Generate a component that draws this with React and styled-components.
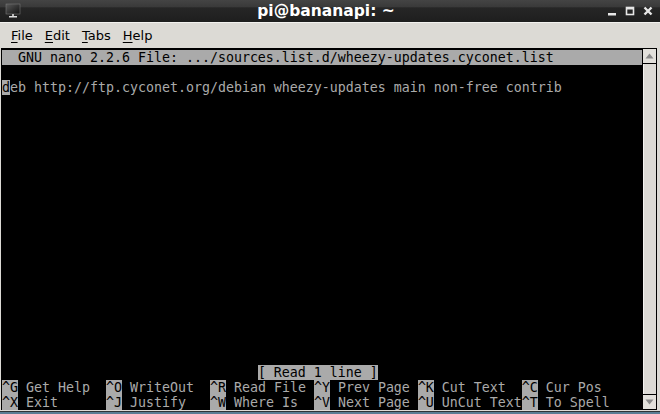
import styled, { createGlobalStyle } from "styled-components";

const GlobalStyle = createGlobalStyle`
    html, body {
        margin: 0;
        padding: 0;
        background: #5a7d94;
    }
    #root {
        width: 660px;
        height: 414px;
        overflow: hidden;
    }
`

const shortcuts = [
    [["^G", "Get Help"], ["^O", "WriteOut"], ["^R", "Read File"], ["^Y", "Prev Page"], ["^K", "Cut Text"], ["^C", "Cur Pos"]],
    [["^X", "Exit"], ["^J", "Justify"], ["^W", "Where Is"], ["^V", "Next Page"], ["^U", "UnCut Text"], ["^T", "To Spell"]],
]

function pad(str, n) {
    return (str + " ".repeat(n)).slice(0, n)
}

function MonitorIcon() {
    return (
        <svg width="16" height="16" viewBox="0 0 16 16">
            <defs>
                <linearGradient id="scr" x1="0" y1="0" x2="1" y2="1">
                    <stop offset="0" stopColor="#5a5a5a" />
                    <stop offset="1" stopColor="#111" />
                </linearGradient>
            </defs>
            <rect x="1" y="1" width="14" height="10" fill="url(#scr)" stroke="#777" strokeWidth="0.6" />
            <rect x="7" y="11" width="2" height="2" fill="#bbb" />
            <rect x="4" y="13" width="8" height="1.5" fill="#ddd" />
        </svg>
    )
}

export default function App() {
    const header = pad("  GNU nano 2.2.6 File: .../sources.list.d/wheezy-updates.cyconet.list", 80)

    return (
        <>
            <GlobalStyle />
            <StyledWindow>
                <StyledTitleBar>
                    <StyledIconSlot><MonitorIcon /></StyledIconSlot>
                    <StyledTitle>pi@bananapi: ~</StyledTitle>
                    <StyledControls>
                        <svg width="12" height="12" viewBox="0 0 12 12"><rect x="2" y="8" width="8" height="2.5" fill="#e6e6e6" /></svg>
                        <svg width="12" height="12" viewBox="0 0 12 12"><rect x="2.5" y="2.5" width="7" height="7" fill="none" stroke="#e6e6e6" strokeWidth="1.6" /><rect x="2.5" y="2.5" width="7" height="2" fill="#e6e6e6" /></svg>
                        <svg width="12" height="12" viewBox="0 0 12 12"><path d="M2.5 2.5 L9.5 9.5 M9.5 2.5 L2.5 9.5" stroke="#e6e6e6" strokeWidth="2.4" /></svg>
                    </StyledControls>
                </StyledTitleBar>
                <StyledMenuBar>
                    <StyledMenuItem><u>F</u>ile</StyledMenuItem>
                    <StyledMenuItem><u>E</u>dit</StyledMenuItem>
                    <StyledMenuItem><u>T</u>abs</StyledMenuItem>
                    <StyledMenuItem><u>H</u>elp</StyledMenuItem>
                </StyledMenuBar>
                <StyledBody>
                    <StyledTerminal>
                        <StyledRow><StyledInv>{header}</StyledInv></StyledRow>
                        <StyledRow />
                        <StyledRow><StyledInv>d</StyledInv>eb http://ftp.cyconet.org/debian wheezy-updates main non-free contrib</StyledRow>
                        {Array.from({ length: 18 }).map((_, i) => <StyledRow key={i} />)}
                        <StyledRow>{" ".repeat(32)}<StyledInv>[ Read 1 line ]</StyledInv></StyledRow>
                        {shortcuts.map((line, i) => (
                            <StyledRow key={"s" + i}>
                                {line.map(([key, label], j) => (
                                    <span key={j}>
                                        <StyledInv>{key}</StyledInv>
                                        {j === line.length - 1 ? " " + label : pad(" " + label, 11)}
                                    </span>
                                ))}
                            </StyledRow>
                        ))}
                    </StyledTerminal>
                    <StyledScrollbar>
                        <StyledArrowButton>
                            <svg width="9" height="6" viewBox="0 0 9 6"><path d="M0.5 5.5 L4.5 0.5 L8.5 5.5 Z" fill="#8a8a8a" /></svg>
                        </StyledArrowButton>
                        <StyledTrough />
                        <StyledArrowButton>
                            <svg width="9" height="6" viewBox="0 0 9 6"><path d="M0.5 0.5 L4.5 5.5 L8.5 0.5 Z" fill="#8a8a8a" /></svg>
                        </StyledArrowButton>
                    </StyledScrollbar>
                </StyledBody>
            </StyledWindow>
        </>
    )
}

const StyledWindow = styled.div`

    width: 660px;
    height: 412px;
    display: flex;
    flex-direction: column;
    background-color: #dcdad5;
    border-bottom: 1px solid #2e3436;
    box-sizing: border-box;

`

const StyledTitleBar = styled.div`

    height: 22px;
    display: flex;
    flex-direction: row;
    align-items: center;
    background: linear-gradient(to bottom, #444 0%, #3a3a3a 30%, #262626 36%, #1e1e1e 100%);
    padding: 0 6px 0 5px;
    flex-shrink: 0;

`

const StyledIconSlot = styled.div`

    width: 16px;
    height: 16px;
    display: flex;

`

const StyledTitle = styled.div`

    flex: 1;
    text-align: center;
    color: #ffffff;
    font-family: 'DejaVu Sans', sans-serif;
    font-weight: bold;
    font-size: 15.5px;
    padding-left: 25px;

`

const StyledControls = styled.div`

    display: flex;
    flex-direction: row;
    align-items: center;
    gap: 6px;

`

const StyledMenuBar = styled.div`

    height: 25px;
    display: flex;
    flex-direction: row;
    align-items: center;
    padding: 0 5px;
    background-color: #dcdad5;
    border-top: 1px solid #f2f1ee;
    box-sizing: border-box;
    flex-shrink: 0;

`

const StyledMenuItem = styled.div`

    padding: 0 6px;
    font-family: 'DejaVu Sans', sans-serif;
    font-size: 13px;
    color: #000;
    margin-top: 1px;

    u {
        text-decoration-thickness: 1px;
        text-underline-offset: 2px;
    }

`

const StyledBody = styled.div`

    flex: 1;
    display: flex;
    flex-direction: row;
    padding: 1px 2px 1px 1px;
    min-height: 0;

`

const StyledTerminal = styled.div`

    width: 641px;
    background-color: #000;
    padding: 2px 0 0 1px;
    box-sizing: border-box;
    font-family: 'DejaVu Sans Mono', monospace;
    font-size: 13.29px;
    color: #aaaaaa;
    overflow: hidden;

`

const StyledRow = styled.div`

    height: 15px;
    line-height: 15px;
    white-space: pre;

`

const StyledInv = styled.span`

    background-color: #aaaaaa;
    color: #000;

`

const StyledScrollbar = styled.div`

    width: 15px;
    display: flex;
    flex-direction: column;
    border: 1px solid #000;
    box-sizing: border-box;
    background-color: #dcdad5;

`

const StyledArrowButton = styled.div`

    height: 14px;
    display: flex;
    align-items: center;
    justify-content: center;
    background-color: #e2e0db;
    border-bottom: 1px solid #000;

    &:last-child {
        border-bottom: none;
        border-top: 1px solid #000;
    }

`

const StyledTrough = styled.div`

    flex: 1;
    background-color: #dcdad5;
    border-left: 1px solid #f4f3f0;

`
